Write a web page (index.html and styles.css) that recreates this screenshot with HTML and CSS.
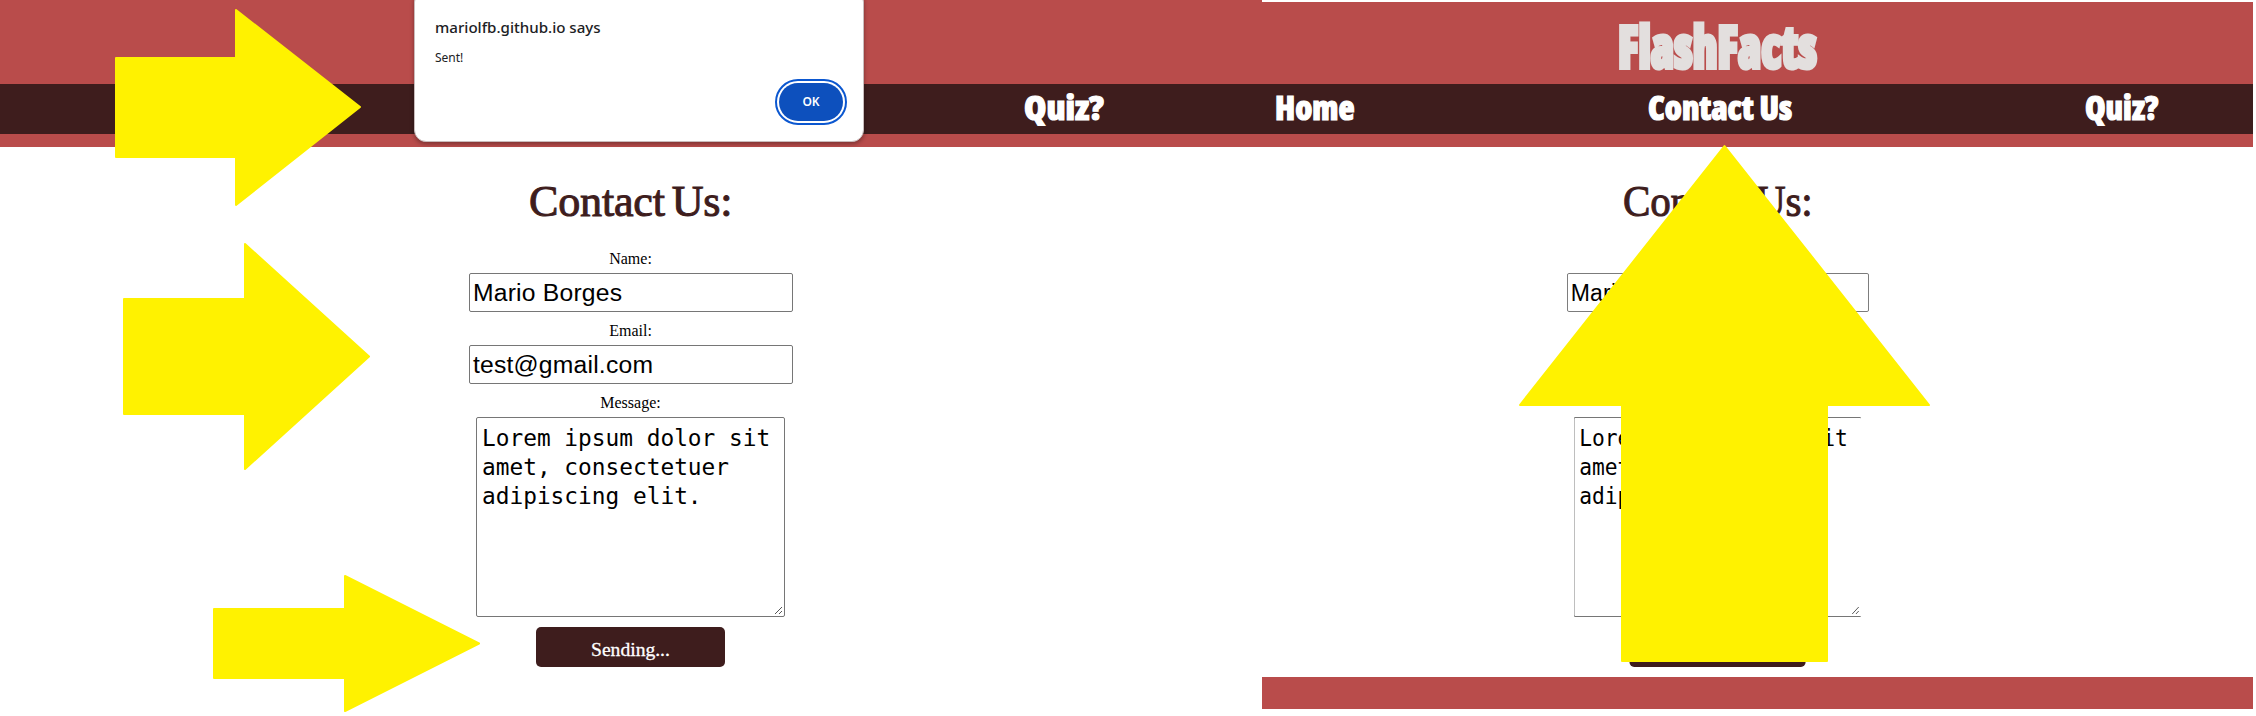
FILE: index.html
```
<!DOCTYPE html>
<html lang="en">
<head>
<meta charset="utf-8">
<title>FlashFacts - Contact Us</title>
<link rel="stylesheet" href="styles.css">
</head>
<body>
<main class="board">
  <section class="panel panel-sent">
    <header class="banner"></header>
    <nav class="nav"><a class="link link-quiz">Quiz?</a></nav>
    <div class="strip"></div>
    <form class="form">
      <h1 class="title"><span class="title-text">Contact Us:</span></h1>
      <label class="label">Name:</label>
      <div class="field">Mario Borges</div>
      <label class="label">Email:</label>
      <div class="field">test@gmail.com</div>
      <label class="label">Message:</label>
      <div class="message">Lorem ipsum dolor sit<br>amet, consectetuer<br>adipiscing elit.<svg class="grip" viewBox="0 0 9 9"><path d="M1 8L8 1M5 8L8 5"/></svg></div>
      <div class="send"><span class="send-text">Sending...</span></div>
    </form>
    <div class="dialog">
      <div class="dialog-title">mariolfb.github.io says</div>
      <div class="dialog-body">Sent!</div>
      <div class="ok"><span class="ok-text">OK</span></div>
    </div>
  </section>
  <section class="panel panel-nav">
    <header class="banner"><span class="logo">FlashFacts</span></header>
    <nav class="nav"><a class="link link-home">Home</a><a class="link link-contact">Contact Us</a><a class="link link-quiz-narrow">Quiz?</a></nav>
    <div class="strip"></div>
    <form class="form form-narrow">
      <h1 class="title"><span class="title-text">Contact Us:</span></h1>
      <label class="label">Name:</label>
      <div class="field">Mario Borges</div>
      <label class="label">Email:</label>
      <div class="field">test@gmail.com</div>
      <label class="label">Message:</label>
      <div class="message message-cut">Lorem ipsum dolor sit<br>amet, consectetuer<br>adipiscing elit.<svg class="grip" viewBox="0 0 9 9"><path d="M1 8L8 1M5 8L8 5"/></svg></div>
      <div class="send"></div>
    </form>
    <footer class="footer"></footer>
  </section>
  <svg class="arrows" viewBox="0 0 2256 716">
    <path d="M116 58H236V10L360 107L236 205V157H116Z"/>
    <path d="M124 299H245V244L369 356.500L245 469V414H124Z"/>
    <path d="M214 609H345V576L479 643.500L345 711V678H214Z"/>
    <path d="M1622 661V405H1520L1724.500 146L1929 405H1827V661Z"/>
  </svg>
</main>
</body>
</html>
```
FILE: styles.css
```
* { box-sizing: border-box; }
body { margin: 0; background: #fff; }
.board { position: relative; display: flex; width: 2256px; height: 716px; overflow: hidden; }
.panel { display: flex; flex-direction: column; height: 716px; }
.panel-sent { position: relative; width: 1262px; }
.panel-nav { width: 991px; padding-top: 2px; }
.banner { flex: none; height: 84px; background: #b94c4b; }
.panel-nav .banner { height: 82px; padding: 9px 0 0 356px; }
.nav { flex: none; display: flex; height: 50px; background: #3e1d1d; }
.strip { flex: none; height: 13px; background: #b94c4b; }
.logo, .link, .title-text, .send-text, .dialog-title, .dialog-body, .ok-text { display: block; white-space: nowrap; transform-origin: 0 0; }
.logo { width: 200px; font: 800 58px/70px "Open Sans", sans-serif; font-stretch: 75%; color: #e3dfde; -webkit-text-stroke: 4px #e3dfde; transform: scaleX(.81); }
.link { font: 800 34px/46px "Open Sans", sans-serif; font-stretch: 75%; color: #fff; -webkit-text-stroke: 1.2px #fff; transform: scaleX(.975); }
.link-quiz { width: 80px; margin-left: 1024px; transform: scaleX(1.06); }
.link-home { width: 80px; margin-left: 13px; }
.link-contact { width: 144px; margin-left: 293px; }
.link-quiz-narrow { width: 74px; margin-left: 293px; }
.form { display: flex; flex-direction: column; align-items: center; height: 530px; }
.form-narrow { width: 912px; transform: scaleX(.932); }
.title { width: 205px; height: 100px; margin: 0; padding-top: 27px; font: 400 45px/54px "Liberation Serif", serif; letter-spacing: -.2px; word-spacing: -4px; color: #3e1d1d; -webkit-text-stroke: 1px #3e1d1d; }
.title-text { transform: scaleX(.98); }
.label { height: 26px; padding: 2px 1px 0 0; font: 16px/20px "Liberation Serif", serif; color: #000; }
.field { width: 324px; height: 39px; margin-bottom: 7px; padding: 1px 3px; border: 1px solid #767676; border-radius: 2px; font: 24.700px/35px "Liberation Sans", sans-serif; letter-spacing: .2px; color: #000; }
.message { position: relative; width: 309px; height: 200px; margin-right: 1px; padding: 6px 5px; border: 1px solid #767676; border-radius: 2px; font: 22.800px/29px "DejaVu Sans Mono", monospace; white-space: nowrap; color: #000; }
.message-cut { border-right-color: transparent; }
.grip { position: absolute; right: 1px; bottom: 1px; width: 9px; height: 9px; fill: none; stroke: #555; stroke-width: 1; }
.send { width: 189px; height: 40px; margin: 10px 1px 0 0; padding: 5px 0 0 55px; border-radius: 5px; background: #3e1d1d; color: #fff; font: 19.600px/36px "Liberation Serif", serif; -webkit-text-stroke: .3px #fff; }
.dialog { position: absolute; left: 414px; top: -10px; display: flex; flex-direction: column; width: 450px; height: 152px; padding: 25px 16px 0 20px; border: 1px solid #c9bcbc; border-radius: 12px; background: #fff; box-shadow: 0 2px 4px #0005; color: #202124; }
.dialog-title { font: 500 15.100px/22px "Noto Sans", sans-serif; }
.dialog-body { margin-top: 10px; font: 12px/20px "Noto Sans", sans-serif; }
.ok { align-self: flex-end; width: 72px; height: 46px; margin-top: 11px; padding: 2px; border: 2px solid #0b57d0; border-radius: 23px; }
.ok-text { height: 38px; border-radius: 19px; background: #0d50bd; color: #fff; font: 600 12px/38px "Noto Sans", sans-serif; text-align: center; }
.footer { height: 32px; background: #b94c4b; }
.arrows { position: absolute; left: 0; top: 0; width: 2256px; height: 716px; fill: #fff200; stroke: #fff200; stroke-width: 2; stroke-linejoin: round; }
```
